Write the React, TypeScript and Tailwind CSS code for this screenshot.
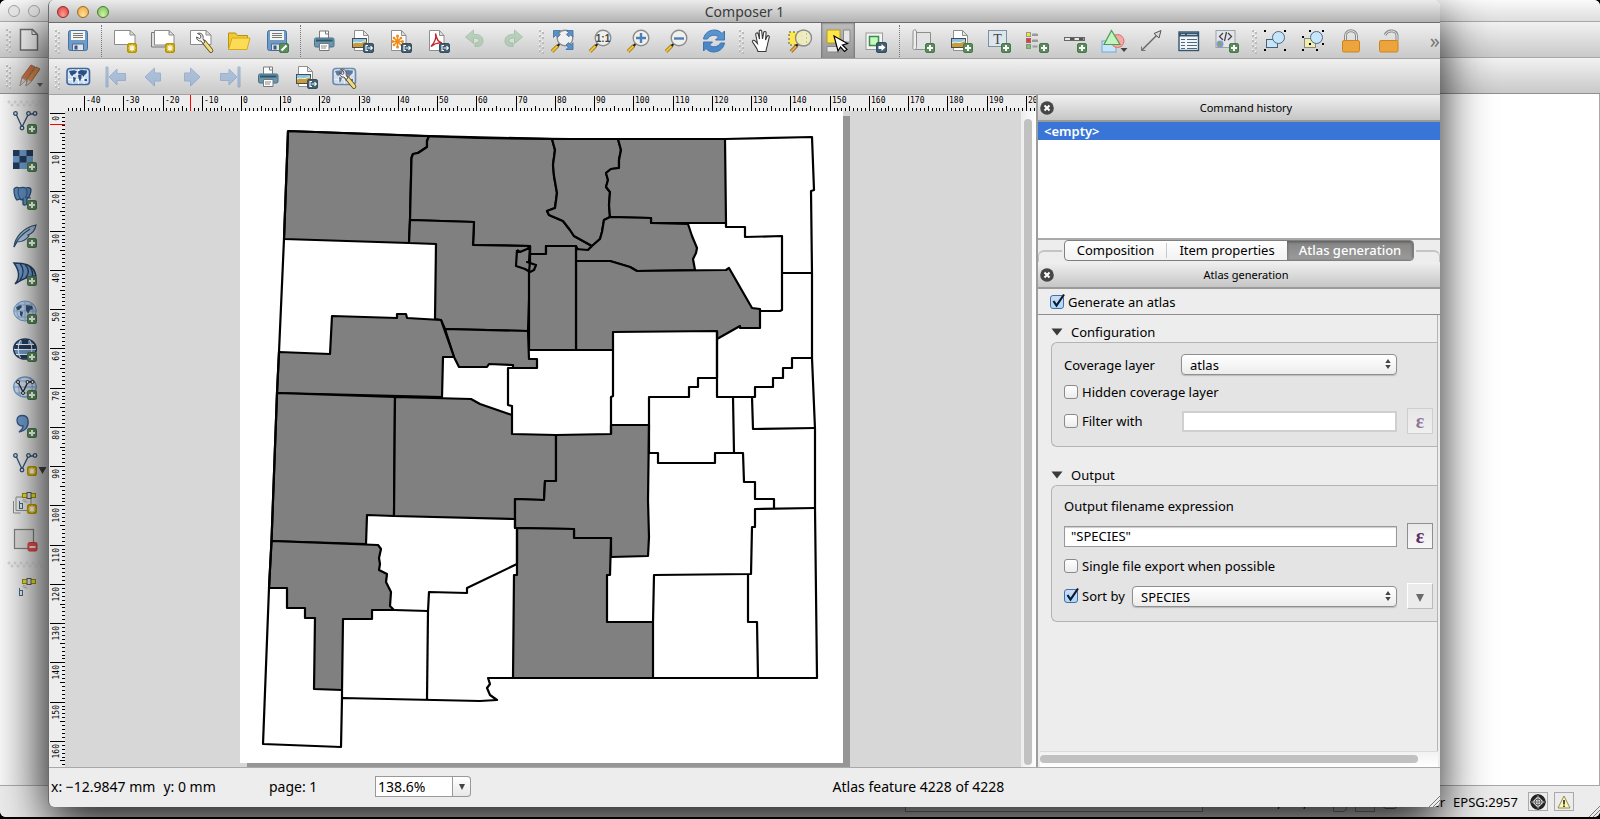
import { useState, type ReactNode } from "react";
import clsx from "clsx";

/* ---------- icon helpers ---------- */

function Icon({ children, faded }: { children: ReactNode; faded?: boolean }) {
    return (
        <svg viewBox="0 0 24 24" className={clsx("h-6 w-6 shrink-0 overflow-visible", faded && "opacity-50")} fill="none" aria-hidden="true">
            {children}
        </svg>
    );
}

function PlusBadge() {
    return (
        <g>
            <rect x="14.5" y="14.5" width="9" height="9" rx="1.5" fill="#5a8c5a" stroke="#48774a" />
            <path d="M19 16v6M16 19h6" stroke="#fff" strokeWidth="2" />
        </g>
    );
}

function StarBadge() {
    return (
        <g>
            <rect x="14.5" y="14.5" width="9" height="9" rx="1.5" fill="#c4a000" stroke="#b79500" />
            <path d="M19 15.5v7M15.5 19h7M16.5 16.5l5 5M21.500 16.500l-5 5" stroke="#fffbe0" strokeWidth="1.200" />
        </g>
    );
}

function ExportBadge() {
    return (
        <g>
            <rect x="13.500" y="14.500" width="10" height="9" rx="1.500" fill="#415f73" stroke="#34505f" />
            <path d="M18 16.500h-2v5h2M17.500 19h4.500M20.500 17.200l1.800 1.800-1.800 1.800" stroke="#fff" strokeWidth="1.100" />
        </g>
    );
}

function Lens({ children }: { children?: ReactNode }) {
    return (
        <g>
            <path d="M2 22.500l6-6" stroke="#8a6a10" strokeWidth="3.600" />
            <path d="M2 22.500l6-6" stroke="#f5c431" strokeWidth="2.200" />
            <path d="M7.500 17l2.500-2.500" stroke="#222" strokeWidth="2.200" />
            <circle cx="15" cy="9" r="7.800" fill="#f2f2f0" fillOpacity=".85" stroke="#8c8c8c" strokeWidth="1.400" />
            {children}
        </g>
    );
}

const sheet = "M4.500 1.500h9l5 5v15h-14zM13.500 1.500v5h5";
const wide = "M1.500 1.500h15.500l5 4.500v9.500h-20.500zM17 1.500v4.500h5";

function Wrench() {
    return (
        <g>
            <path d="M15 13l7 8.500" stroke="#5c4a18" strokeWidth="4.600" strokeLinecap="round" />
            <path d="M15.500 13.500l6.500 8" stroke="#f1dc86" strokeWidth="3" strokeLinecap="round" />
            <path d="M8.500 4.500c2-1 5 0 5.500 2.500.3 1.500 0 2.500 0 3l2 3-2 1.500-2-2.500c-2 .5-4.500-1-4.500-4l3 1.500 1.500-1-.5-2.500z" fill="#f6f6f6" stroke="#555" />
        </g>
    );
}

const saveShape = (
    <g>
        <rect x="2.500" y="1.500" width="19" height="20" rx="2" fill="#6f9bc8" stroke="#4472a4" />
        <rect x="5" y="2" width="14" height="9" fill="#f6f6f0" />
        <path d="M7 4.500h10M7 6.500h10M7 8.500h10" stroke="#777" />
        <path d="M6.500 21.500v-6.500h11v6.500z" fill="#dfe3ea" stroke="#4d6a92" />
        <rect x="8.500" y="16.500" width="3" height="4" fill="#355785" />
    </g>
);

const printShape = (
    <g>
        <path d="M7.500 9v-7h9l0 7" fill="#fff" stroke="#7b7b7b" />
        <path d="M13.500 2v3h3" stroke="#7b7b7b" />
        <rect x="2.500" y="9" width="19.500" height="9" rx="1.500" fill="#6a97ae" stroke="#47718a" />
        <path d="M4 11.500h16.500" stroke="#2f5468" strokeWidth="2" />
        <path d="M7.500 14.500h9.500v7h-9.500z" fill="#fff" stroke="#777" />
        <path d="M9 17h6M9 19h5" stroke="#888" />
    </g>
);

const pictureShape = (
    <g>
        <path d={sheet} fill="#fff" stroke="#8e8e8e" />
        <rect x="2.500" y="9.500" width="14" height="9" fill="#86c3ef" stroke="#4b4b4b" />
        <path d="M3 18v-3c3-2 6-1 8-1s4-2 5.500-1.500v5.500z" fill="#c89b3c" />
        <path d="M3 14c3-2 6 0 8-.5s3-2 5-1.500" stroke="#fff7c0" />
    </g>
);

const worldShape = (
    <g>
        <rect x="1" y="3.500" width="22.500" height="16" rx="3" fill="#cfe0f5" stroke="#3d689f" strokeWidth="1.600" />
        <path d="M2 9h20M2 14.500h20M7 4v15M12.500 4v15M18 4v15" stroke="#fff" strokeWidth=".8" />
        <path d="M3 6l5-.8 3 1-1.500 2.500-2.500 1-.5 1.500-2-1.500zM7 12l3 .8-1 3.200-1.500 2zM12 6.500l3-1.500 6 .5-.5 3-2 1.500-1 2-1.500-2-2-.5-1.500 0zM12 10l3.500 0 0 3-1.500 3.500-1.500-3zM18.500 14l2.500 0 0 2-2.500 0z" fill="#2c4f80" />
    </g>
);

const gpsShape = (
    <g>
        <path d="M9 5.500h14" stroke="#8e8b16" strokeWidth="5" />
        <path d="M10 5.500h12" stroke="#e2df20" strokeWidth="3" />
        <rect x="14" y="2.500" width="4" height="6" fill="#ddd" stroke="#555" />
        <path d="M13 10a4 4 0 0 1-3-1M14.500 12a7 7 0 0 1-5-1.500" stroke="#999" strokeWidth=".8" />
    </g>
);

const vectorShape = (
    <g stroke="#35506e" strokeWidth="1.300">
        <path d="M3 4l6 13L15.500 4h5.500" />
        <g fill="#d5deea">
            <circle cx="2.500" cy="3.500" r="1.800" />
            <circle cx="15.500" cy="3.500" r="1.800" />
            <circle cx="22" cy="3.500" r="1.800" />
            <circle cx="9" cy="18" r="1.800" />
        </g>
    </g>
);

const arrowLeft = "M2 12l9.500-9v5h6v8h-6v5z";
const undo = "M1.500 8l8-7v4.500c6-.5 9.500 2 9.500 6.500s-3.500 5.500-8 5.500v-3.500c3 0 4-1 4-2.500s-2-2.500-5.500-2.500v5.500z";

const ic: Record<string, ReactNode> = {
    newDoc: <Icon><path d="M3.500 1.500h12l5 5v15.500h-17z" fill="#f4f4f4" stroke="#6e6e6e" strokeWidth="1.500" /><path d="M15 1.500v5h5.500" stroke="#6e6e6e" /></Icon>,
    pencils: <Icon><path d="M3 22l2-9 9-12 4 2-9 13z" fill="#d27545" stroke="#9a6a50" /><path d="M9 22l1-7 9-12 4 2-9 13z" fill="#d98a4a" stroke="#a06c4b" /><path d="M3 22l2-8 4 2zM9 22l1.500-7 4 2.500z" fill="#d9cbb5" stroke="#999" /><path d="M20 19h6l-3 4z" fill="#666" /></Icon>,
    save: <Icon>{saveShape}</Icon>,
    newComp: <Icon><path d={wide} fill="#fff" stroke="#8b8b8b" /><StarBadge /></Icon>,
    dupComp: <Icon><path d="M.5 18v-14.500h18" stroke="#777" fill="#ddd" /><path d="M.5 4v14h14" stroke="#777" /><path d="M3.500 1.500h14.500l5 4.500v10h-19.500zM18 1.500v4.500h5" fill="#fff" stroke="#8b8b8b" /><StarBadge /></Icon>,
    compManager: <Icon><path d={wide} fill="#fff" stroke="#8b8b8b" /><Wrench /></Icon>,
    folder: <Icon><path d="M1.500 20.500v-16.500h7l2 2.500h10v3" fill="#f2c932" stroke="#b98f14" /><path d="M1.500 20.500l3.500-11.500h18l-3 11.500z" fill="#fcdb55" stroke="#d6a91d" /></Icon>,
    saveAs: <Icon>{saveShape}<rect x="14.500" y="14.500" width="9" height="9" rx="1.500" fill="#5a8c5a" stroke="#48774a" /><path d="M16.500 21.500l5-5" stroke="#fff" strokeWidth="2.200" /></Icon>,
    print: <Icon>{printShape}</Icon>,
    exportImg: <Icon>{pictureShape}<ExportBadge /></Icon>,
    exportSvg: <Icon><path d="M3.500 1.500h10l4.500 5v15h-14.500zM13.500 1.500v5h4.500" fill="#fff" stroke="#8e8e8e" /><path d="M9.500 7v11M4 12.500h11M5.500 8.500l8 8M13.500 8.500l-8 8" stroke="#f08c1e" strokeWidth="1.600" /><g fill="#f08c1e"><circle cx="9.500" cy="7" r="1.500" /><circle cx="9.500" cy="18" r="1.500" /><circle cx="4.500" cy="12.500" r="1.500" /><circle cx="14.500" cy="12.500" r="1.500" /><circle cx="6" cy="9" r="1.300" /><circle cx="13" cy="9" r="1.300" /><circle cx="6" cy="16" r="1.300" /></g><ExportBadge /></Icon>,
    exportPdf: <Icon><path d="M3.500 1.500h10l4.500 5v15h-14.500zM13.500 1.500v5h4.500" fill="#fff" stroke="#8e8e8e" /><path d="M9.500 4.500c1 4 0 8-4.500 13 3-2.500 7-4 11-3.500-3-.5-5.500-4-6.500-9.500z" stroke="#c4262b" strokeWidth="1.400" /><ExportBadge /></Icon>,
    undo: <Icon faded><path d={undo} fill="#8fbf94" stroke="#6ea877" /></Icon>,
    redo: <Icon faded><g transform="matrix(-1 0 0 1 22 0)"><path d={undo} fill="#8fbf94" stroke="#6ea877" /></g></Icon>,
    zoomFull: <Icon><Lens /><path d="M3.500 1.500h7l-2.200 2.200 2 2-2.600 2.600-2-2-2.200 2.200zM23 1.500v6.500l-2.200-2.200-2 2-2.400-2.400 2-2-2-1.900zM23 20.500h-7l2.300-2.300-2.300-2.200 2.400-2.500 2.400 2.400 2.200-2.200z" fill="#5b8fc6" stroke="#3a6ea6" strokeWidth=".8" /></Icon>,
    zoomActual: <Icon><Lens><text x="15" y="13" textAnchor="middle" fontSize="10" fontWeight="700" fill="#444" fontFamily="Liberation Sans, sans-serif">1:1</text></Lens></Icon>,
    zoomIn: <Icon><Lens><path d="M15 4v10M10 9h10" stroke="#4d7fb5" strokeWidth="2.400" /></Lens></Icon>,
    zoomOut: <Icon><Lens><path d="M10 9.500h10" stroke="#4d7fb5" strokeWidth="2.400" /></Lens></Icon>,
    refresh: <Icon><path d="M1.500 10c1-6 6-9 11-9 3 0 6 1.500 7.500 3.500l2.500-2.500v9h-9l3-3c-3-3-9-2-11 2z" fill="#5b93cf" stroke="#3b74b5" /><path d="M22.500 14c-1 6-6 9-11 9-3 0-6-1.500-7.500-3.500l-2.500 2.500v-9h9l-3 3c3 3 9 2 11-2z" fill="#4a86c8" stroke="#3b74b5" /></Icon>,
    hand: <Icon><path d="M8 22.500c-1-4-4-7-5.500-9.500-.5-1.500 1.500-2.500 2.500-1l2.500 2.500-1.800-9c-.2-1.800 2-2.200 2.500-.5l1.300 5-.3-7.500c0-1.800 2.500-1.800 2.600 0l.7 7.500 1.200-6.500c.4-1.600 2.600-1.200 2.400.5l-.6 7 1.500-3.500c.8-1.500 2.700-.8 2.200 1-.8 3-1.200 5-1.700 7-.5 3-1.500 4.500-1.500 7z" fill="#fff" stroke="#3c3c3c" strokeWidth="1.100" /></Icon>,
    zoomSel: <Icon><rect x="1" y="3" width="13" height="13" fill="#ffe948" stroke="#555" strokeDasharray="2 2" /><path d="M3 22.500l6-6" stroke="#8a5a10" strokeWidth="3.600" /><path d="M3 22.500l6-6" stroke="#e5ae4c" strokeWidth="2" /><path d="M8 17l2.500-2.500" stroke="#222" strokeWidth="2.200" /><circle cx="15.500" cy="9" r="8" fill="#efebc4" fillOpacity=".92" stroke="#8c8c8c" strokeWidth="1.400" /><path d="M18.500 4v10" stroke="#d6c861" strokeDasharray="2 2" /></Icon>,
    select: <Icon><rect x="1" y="1" width="13" height="13" fill="#ffe54a" stroke="#b29c1e" /><path d="M17.500 1h6.500v12h-6.500zM1 17.500h13v5.500h-13z" fill="#e6e6e6" stroke="#888" /><path d="M8 7l13.500 7.500-5 1.500 4.500 4.500-2.500 2-4-4.500-2.500 4z" fill="#fff" stroke="#000" strokeWidth="1.200" /></Icon>,
    moveContent: <Icon><rect x="2" y="4" width="16.500" height="16.500" fill="#f4f4f4" stroke="#999" /><rect x="5.500" y="7.500" width="9" height="9" fill="#c6fbc0" stroke="#3e8a48" strokeWidth="1.500" /><rect x="12.500" y="13.500" width="10" height="10" rx="1.500" fill="#415f73" stroke="#34505f" /><path d="M14.500 17h3v-2l4 3.500-4 3.500v-2h-3z" fill="#fff" /></Icon>,
    addMap: <Icon><path d="M4.500 3.500h15v17h-15z" fill="#e3e3e3" stroke="#8e8e8e" /><path d="M4.500 20.500c-3 1-3-2-2.500-3.500v-14c0-3 3.500-3 3.500 0v14.500c0 2-1 3-1 3z" fill="#eee" stroke="#8e8e8e" /><PlusBadge /></Icon>,
    addImage: <Icon>{pictureShape}<PlusBadge /></Icon>,
    addLabel: <Icon><rect x="1.500" y="1.500" width="18" height="16" fill="#dde6ee" stroke="#7e8f9e" /><text x="10.500" y="14.500" textAnchor="middle" fontSize="14" fill="#444" fontFamily="Liberation Serif, serif">T</text><PlusBadge /></Icon>,
    addLegend: <Icon><path d="M7.500 5.500h5M7.500 11.500h5M7.500 17.500h5M7 6h6M7 12h6" stroke="#999" strokeWidth="2" /><rect x="1.500" y="3.500" width="4" height="4" fill="#f2e61c" stroke="#999" /><rect x="1.500" y="9.500" width="4" height="4" fill="#d94040" stroke="#b06060" /><rect x="1.500" y="15.500" width="4" height="4" fill="#88bb80" stroke="#7a9a78" /><PlusBadge /></Icon>,
    addScale: <Icon><rect x="1.500" y="8.500" width="20" height="3" fill="#e8e8e8" stroke="#666" /><path d="M7 10h4.500M16 10h4.500" stroke="#555" strokeWidth="2" /><PlusBadge /></Icon>,
    addShape: <Icon><rect x="1" y="12" width="14" height="11" fill="#c7e5fa" stroke="#76a8cf" /><circle cx="16.500" cy="12" r="6.500" fill="#f3a9a5" stroke="#dd6f6b" /><path d="M10.500 1.500l8.500 14h-16z" fill="#c4f4bd" stroke="#4d9b56" strokeWidth="1.200" /><path d="M19.500 19h7l-3.500 4z" fill="#444" /></Icon>,
    addArrow: <Icon><path d="M2.500 21.500l15-15" stroke="#666" strokeWidth="1.400" /><path d="M22 1.500l-2 7.500-5-4.500z" fill="#d8d8d8" stroke="#555" /><path d="M2.500 17.500v4h4" stroke="#777" /></Icon>,
    addTable: <Icon><rect x="2" y="3" width="19.500" height="18.500" fill="#f2f5f7" stroke="#35556f" strokeWidth="1.400" /><path d="M2 5.500h19" stroke="#35556f" strokeWidth="4" /><path d="M4 5.500h4M10 5.500h10" stroke="#a9bccb" /><path d="M4 10.500h4M10 10.500h10M4 13.500h4M10 13.500h10M4 16.500h4M10 16.500h10M4 19.500h4M10 19.500h10" stroke="#4b6a82" /></Icon>,
    addHtml: <Icon><rect x="1" y="1.500" width="19" height="17" fill="#e2e6ea" stroke="#99a2aa" /><path d="M8 4l-3.500 3.500 3.500 3.500M13 4l3.500 3.500-3.500 3.500M11.500 3l-2 9" stroke="#444" strokeWidth="1.300" /><circle cx="5" cy="15" r="3.500" fill="#9b8ae0" /><path d="M3 13.500c2-1 4 0 3.500 2s-2 3-3 1.500z" fill="#58c05a" /><PlusBadge /></Icon>,
    group: <Icon><rect x="3.500" y="10.500" width="11" height="8" fill="#c7e5fa" stroke="#4a5f70" /><circle cx="15.500" cy="8.500" r="6" fill="#c7e5fa" stroke="#4a6a84" /><path d="M1 1h2v2h-2zM21 1h2v2h-2zM1 20h2v2h-2zM21 20h2v2h-2z" fill="#000" /></Icon>,
    ungroup: <Icon><rect x="3.500" y="9.500" width="11" height="9" fill="#f2eea6" stroke="#888" /><circle cx="15.500" cy="8.500" r="6" fill="#c7e5fa" stroke="#4a6a84" /><path d="M8 1h2v2h-2zM21 1h2v2h-2zM1 7h2v2h-2zM8 14h2v2h-2zM21 14h2v2h-2zM1 20h2v2h-2zM15 20h2v2h-2z" fill="#000" /></Icon>,
    lock: <Icon><path d="M6.500 12v-5c0-7 11-7 11 0v5" stroke="#8a8a8a" strokeWidth="3" /><path d="M6.500 12v-5c0-7 11-7 11 0v5" stroke="#e8e8e8" /><rect x="3.500" y="11.500" width="17" height="11.500" rx="1.500" fill="#eba53c" stroke="#cc8420" /></Icon>,
    unlock: <Icon><path d="M8 6c3-6 12-5 12 1v5" stroke="#8a8a8a" strokeWidth="3" /><path d="M8 6c3-6 12-5 12 1v5" stroke="#e8e8e8" /><rect x="2.500" y="11.500" width="18.500" height="11.500" rx="1.500" fill="#eba53c" stroke="#cc8420" /></Icon>,
    atlas: <Icon>{worldShape}</Icon>,
    first: <Icon faded><g fill="#7aa0d2" stroke="#5b86c0"><path d="M2 2h2v20h-2z" /><path d="M5 12l8-8v4.500h8.500v7h-8.500v4.500z" /></g></Icon>,
    prev: <Icon faded><g transform="translate(1 0)"><path d={arrowLeft} fill="#7aa0d2" stroke="#5b86c0" /></g></Icon>,
    next: <Icon faded><g transform="matrix(-1 0 0 1 22 0)"><path d={arrowLeft} fill="#7aa0d2" stroke="#5b86c0" /></g></Icon>,
    last: <Icon faded><g fill="#7aa0d2" stroke="#5b86c0" transform="matrix(-1 0 0 1 24 0)"><path d="M2 2h2v20h-2z" /><path d="M5 12l8-8v4.500h8.500v7h-8.500v4.500z" /></g></Icon>,
    atlasSettings: <Icon><g opacity=".7">{worldShape}</g><Wrench /></Icon>,
    vector: <Icon>{vectorShape}<PlusBadge /></Icon>,
    raster: <Icon><path d="M0 2h20v19h-20z" fill="#6c98c8" /><path d="M0 2h6.500v6h-6.500zM13.500 2h6.500v6h-6.500zM6.500 8h7v6.500h-7zM0 14.500h6.500v6.500h-6.500z" fill="#243b59" /><PlusBadge /></Icon>,
    postgis: <Icon><path d="M1 3c1-2 4-2 5-1 3-1 5-1 7 0 3-1 5 0 5 2 0 3-1 5-2 7l-2 1v6c-1 1.500-4 1.500-4 0v-5c-1 1-2 1-3 0l-3 1c-2-2-3-7-3-11z" fill="#5e8abb" stroke="#2b4c73" strokeWidth="1.300" /><path d="M5.500 3c-1 4 0 7 2 10M13 3c2 3 1 6-1 9M14 12h4" stroke="#2b4c73" /><PlusBadge /></Icon>,
    spatialite: <Icon><path d="M1 23c1-9 8-19 22-22-1 6-5 9-8 10l1 1c-3 4-8 6-12 6z" fill="#a9c3de" stroke="#35506e" strokeWidth="1.200" /><path d="M1 23c3-8 8-13 16-18" stroke="#35506e" strokeWidth="1.200" /><PlusBadge /></Icon>,
    mssql: <Icon><path d="M1 1c9 0 20 1 22 13-7 0-14 3-21 8 6-7 4-14-1-21z" fill="#6c98c8" stroke="#243b59" strokeWidth="1.400" /><path d="M7 1.500c4 5 4 11 0 16.500M12 2.500c4 4 4 9 1 13M17 5c3 4 3 7 2 10" stroke="#243b59" strokeWidth="1.300" /><PlusBadge /></Icon>,
    wms: <Icon><ellipse cx="12" cy="11" rx="11.300" ry="10" fill="#bcd0e8" stroke="#6f97c4" /><path d="M1 11h22M4 5h16M4 17h16M12 1v20M7 2c-4 6-4 12 0 18M17 2c4 6 4 12 0 18" stroke="#86a9d2" /><path d="M3 7l5-2 1 2-3 3-2 0zM7 11l3 1-1 5-2-2zM13 5l6 1 1 3-3 1-2 4-2-4z" fill="#35506e" /><PlusBadge /></Icon>,
    wcs: <Icon><ellipse cx="12" cy="11" rx="11.300" ry="10" fill="#6c98c8" stroke="#243b59" strokeWidth="1.500" /><path d="M2 7h20v4h-20zM6 17h12v3h-12zM9 2h6v4h-6z" fill="#243b59" /><path d="M1 11.500h22M3 6.500h18M3 16.500h18M7.500 2c-3 6-3 12 0 18M16.500 2c3 6 3 12 0 18" stroke="#eef3f8" /><PlusBadge /></Icon>,
    wfs: <Icon><ellipse cx="12" cy="11" rx="11.300" ry="10" fill="#cbd9ea" stroke="#6f97c4" strokeWidth="1.300" /><path d="M1 11h22M4 5h16M4 17h16M8 1c-3 6-3 14 0 20M17 2c3 6 3 12 0 18" stroke="#7ba0cc" /><path d="M5 6l5 10 5-10h4" stroke="#222" strokeWidth="1.300" /><g fill="#fff" stroke="#222"><circle cx="5" cy="6" r="1.500" /><circle cx="14.500" cy="6" r="1.500" /><circle cx="19.500" cy="6" r="1.500" /><circle cx="10" cy="17" r="1.500" /></g><PlusBadge /></Icon>,
    csv: <Icon><path d="M4 6c0-6 10-6 11 0 1 7-3 11-9 12 4-3 4-5 4-6-4 0-6-2-6-6z" fill="#6c98c8" stroke="#35588a" strokeWidth="1.300" /><PlusBadge /></Icon>,
    newVector: <Icon>{vectorShape}<StarBadge /><path d="M25.500 15h8l-4 7z" fill="#444" /></Icon>,
    gpsNew: <Icon><path d="M.5 11v12h7M3 7v13.500h15v-13.500z" stroke="#8b8b8b" /><rect x="6.500" y="13.500" width="3" height="5" stroke="#3d6b85" /><path d="M6.500 11v3" stroke="#3d6b85" />{gpsShape}<StarBadge /></Icon>,
    removeLayer: <Icon><rect x="1.500" y="1.500" width="19" height="19" fill="#d9dad8" stroke="#7d7d7d" strokeWidth="1.200" /><rect x="15" y="14.500" width="9" height="8.500" rx="1.500" fill="#e0504e" stroke="#c93e3c" /><path d="M16.500 19h6" stroke="#fff" strokeWidth="1.600" /></Icon>,
    gps: <Icon><rect x="6.500" y="14.500" width="3" height="5" stroke="#3d6b85" /><path d="M6.500 12v3" stroke="#3d6b85" />{gpsShape}</Icon>,
};

/* ---------- toolbars ---------- */

function Grip() {
    return (
        <svg width="10" height="26" viewBox="0 0 10 26" className="shrink-0 overflow-visible" aria-hidden="true">
            {[0, 1, 2, 3, 4].map((i) => (
                <g key={i}>
                    <path d={`M6 ${i * 5 + 2}h2v2h-2zM9 ${i * 5 + 4}h2v2h-2z`} fill="#bbb" />
                    <path d={`M6 ${i * 5 + 1}h1v1h-1zM9 ${i * 5 + 3}h1v1h-1z`} fill="#fff" />
                </g>
            ))}
        </svg>
    );
}

function HGrip() {
    return (
        <svg width="36" height="7" viewBox="0 0 36 7" className="shrink-0" aria-hidden="true">
            {[0, 1, 2, 3, 4, 5].map((i) => (
                <path key={i} d={`M${i * 6 + 1} 1h2v2h-2zM${i * 6 + 4} 4h2v2h-2z`} fill="#e4e4e4" stroke="#bdbdbd" strokeWidth=".5" />
            ))}
        </svg>
    );
}

function Separator() {
    return <div className="mx-1 h-8 w-px shrink-0 border-l border-dotted border-[#777]" />;
}

function ToolButton({ name, active }: { name: string; active?: boolean }) {
    return (
        <button
            type="button"
            aria-label={name}
            className="flex h-9 w-[38px] shrink-0 items-center justify-center"
        >
            <span className={clsx("flex h-9 w-[34px] items-center justify-center", active && "bg-linear-to-b from-[#bdbdbd] to-[#949494] shadow-[inset_1px_0_2px_#777,inset_-1px_0_2px_#777]")}>
                {ic[name]}
            </span>
        </button>
    );
}

const mainTools = [
    "grip", "save", "sep", "newComp", "dupComp", "compManager", "folder", "saveAs", "sep",
    "print", "exportImg", "exportSvg", "exportPdf", "undo", "redo", "grip",
    "zoomFull", "zoomActual", "zoomIn", "zoomOut", "refresh", "grip",
    "hand", "zoomSel", "select", "moveContent", "sep",
    "addMap", "addImage", "addLabel", "addLegend", "addScale", "addShape", "addArrow", "addTable", "addHtml", "grip",
    "group", "ungroup", "lock", "unlock",
];
const atlasTools = ["grip", "atlas", "first", "prev", "next", "last", "print", "exportImg", "atlasSettings"];
const layerTools = ["vector", "raster", "postgis", "spatialite", "mssql", "wms", "wcs", "wfs", "csv", "newVector", "gpsNew", "removeLayer"];

function Toolbar({ items, children }: { items: string[]; children?: ReactNode }) {
    return (
        <div className="flex h-9 shrink-0 items-center overflow-hidden border-b border-[#a3a3a3] bg-linear-to-b from-[#f0f0f0] to-[#c9c9c9]">
            {items.map((t, i) => {
                if (t === "grip") return <Grip key={i} />;
                if (t === "sep") return <Separator key={i} />;
                return <ToolButton key={i} name={t} active={t === "select"} />;
            })}
            {children}
        </div>
    );
}

/* ---------- map canvas ---------- */

const MM = 39.24;

function tickPath(length: number, origin: number, vertical: boolean) {
    let d = "";
    for (let i = Math.ceil((-origin / MM) * 10); i <= ((length - origin) / MM) * 10; i++) {
        const at = Math.round(origin + (i * MM) / 10) + 0.5;
        const size = i % 10 === 0 ? 15 : i % 5 === 0 ? 5 : 3;
        d += vertical ? `M15 ${at}h${-size}` : `M${at} 16v${-size}`;
    }
    return d;
}

function HorizontalRuler() {
    return (
        <svg className="h-4 min-w-0 flex-1" aria-label="Horizontal ruler">
            <path d={tickPath(971, 176, false)} stroke="#000" />
            <path d="M125.500 0v16" stroke="#f00" />
            {Array.from({ length: 25 }, (_, i) => i - 4).map((n) => (
                <text key={n} x={Math.round(178 + n * MM)} y="8" className="font-['DejaVu_Sans_Mono',monospace] text-[8px]">
                    {n * 10}
                </text>
            ))}
        </svg>
    );
}

function VerticalRuler() {
    return (
        <svg className="h-full w-[15px] shrink-0 bg-[#ededed]" aria-label="Vertical ruler">
            <path d={tickPath(655, 2, true)} stroke="#000" />
            <path d="M0 13.500h15" stroke="#f00" />
            {Array.from({ length: 17 }, (_, i) => i).map((n) => (
                <text
                    key={n}
                    textAnchor="end"
                    transform={`translate(9 ${Math.round(5 + n * MM)}) rotate(-90)`}
                    className="font-['DejaVu_Sans_Mono',monospace] text-[8px]"
                >
                    {n * 10}
                </text>
            ))}
        </svg>
    );
}

// counties that carry the dark fill
const shaded = [
    "288,131 429,136 427,141 427,147 418,153 413,154 411.5,158 410,220 409,243 284,239",
    "429,136 552,139 555,150 553,165 554,176 557,193 555,208 547,211 549,215 563,221 570,230 574,236 592,246 588,250 578,250 576,246 546,246 546,254 530,254 530,246 473,245 474,222 410,220 411.5,158 413,154 418,153 427,147 427,141",
    "410,220 474,222 473,245 530,246 530,272 528,331 445,329 441,320 435,319 436,244 409,243",
    "552,139 618,139 621,150 619,160 619,168 611,169 606,173 608,180 606,187 610,192 609,205 610,217 604,220 602,232 600,239 592,246 574,236 570,230 563,221 549,215 547,211 555,208 557,193 554,176 553,165 555,150",
    "618,139 725,139 726,223 651,223 651,218 610,217 609,205 610,192 606,187 608,180 606,173 611,169 619,168 619,160 621,150",
    "610,217 651,218 651,223 688,224 692,236 697,248 696,253 693,259 695,270 637,271 630,267 610,261 576,261 576,249 588,250 592,246 600,239 602,232 604,220",
    "576,261 610,261 630,267 637,271 726,270 729,268 752,308 760,309 760,328 740,328 740,326 717,339 717,331 613,332 613,350 576,350",
    "530,254 546,254 546,246 576,246 576,350 529,350 529,272 530,262",
    "445,329 528,331 529,359 537,359 537,368 513,368 513,365 489,364 487,367 459,367 454,357",
    "332,316 397,318 397,314 406,314 407,318 441,320 454,357 443,357 442,397 277,393 279,352 330,354",
    "277,393 395,397 394,516 367,515 366,544 271.5,541 276,420",
    "395,397 471,399 480,404 512,415 512,434 556,435 556,481 545,481 544,500 515,499 515,519 394,516",
    "556,435 611,434 611,425 649,425 648,500 649,537 648,556 611,557 611,538 574,538 574,529 515,528 515,499 544,500 545,481 556,481",
    "517,528 574,529 574,538 611,538 610,575 607,575 607,622 653,622 653,678 513,678 514,575 517,575",
    "271.5,541 378,545 381,549 379,558 380,564 379,570 387,574 386,582 391,592 390,606 394,610 372,610 372,619 343,619 342,690 314,689 315,618 305,618 305,608 287,608 287,588 269,588",
];

const borders = [
    // state outline
    "288,131 478,138 570,139 725,139 812,137 814,190 811,191 812,273 812,358 815,429 815,508 817,678 513,678 488,678 490,684 487,688 490,695 497,700 480,701 342,698 341,747 263,744 269,588 271.5,541 276,420 277,393 279,352 284,239 288,131",
    "726,223 726,227 745,227 745,237 782,236 782,273 811,273",
    "782,273 782,310 780,311 760,311",
    "517,250 520,252 527,249 530,247 529,262 527,262 536,265 534,270 530,272 525,269 516,266 517,250",
    "513,368 508,368 508,405 512,406 512,415",
    "529,350 613,350 613,396 611,397 611,434",
    "717,331 717,378 698,378 698,387 689,387 689,397 649,397 649,425",
    "717,339 717,397 755,397 755,387 773,387 773,378 783,378 783,368 792,368 792,358 812,358",
    "752,397 753,429 815,428",
    "649,425 649,453 658,453 658,463 715,463 715,453 734,453 733,397",
    "734,453 743,453 744,482 755,482 755,499 774,499 774,508",
    "815,508 755,509 755,527 752,527 751,574 654,575 653,622",
    "748,575 748,622 757,622 758,678",
    "515,519 515,528 517,528 517,564 467,588 467,593 429,592 428,611 394,610",
    "428,611 427,699",
    "342,690 342,698",
];

function MapPage() {
    return (
        <svg viewBox="240 111 603 652" className="h-full w-full" aria-label="Map">
            <g stroke="#000" strokeWidth="2.200" strokeLinejoin="round">
                {shaded.map((p) => (
                    <polygon key={p} points={p} fill="#808080" />
                ))}
                {borders.map((p) => (
                    <polyline key={p} points={p} fill="none" />
                ))}
            </g>
        </svg>
    );
}

/* ---------- form controls ---------- */

function CheckBox({ label, defaultChecked }: { label: string; defaultChecked?: boolean }) {
    const [checked, setChecked] = useState(!!defaultChecked);
    return (
        <label className="flex items-center gap-1 whitespace-nowrap">
            <span className="relative h-3.5 w-3.5 shrink-0">
                <input
                    type="checkbox"
                    checked={checked}
                    onChange={(e) => setChecked(e.target.checked)}
                    className="block h-3.5 w-3.5 appearance-none rounded-[3px] border border-[#8a8a8a] bg-linear-to-b from-white to-[#ececec] checked:border-[#4a6aa8] checked:from-[#c9ddf4] checked:to-[#a5dafb]"
                />
                {checked && (
                    <svg viewBox="0 0 16 16" className="pointer-events-none absolute -top-0.5 left-0 h-4 w-4">
                        <path d="M3.500 8l3 4.500L14 1.500" fill="none" stroke="#10182e" strokeWidth="2.200" />
                    </svg>
                )}
            </span>
            {label}
        </label>
    );
}

function PopupSelect({ id, value, label }: { id: string; value: string; label?: string }) {
    return (
        <div className="relative h-[21px] min-w-0 flex-1">
            <select
                id={id}
                aria-label={label}
                className="h-full w-full appearance-none rounded border border-[#8f8f8f] bg-linear-to-b from-white via-[#f6f6f6] to-[#ececec] pl-2 shadow-[0_1px_1px_#bbb]"
            >
                <option>{value}</option>
            </select>
            <svg viewBox="0 0 6 12" className="pointer-events-none absolute top-1 right-1.5 h-3 w-1.5">
                <path d="M3 1l2.700 4h-5.400zM3 11l2.700-4h-5.400z" fill="#444" />
            </svg>
        </div>
    );
}

function ExpressionButton({ disabled }: { disabled?: boolean }) {
    return (
        <button
            type="button"
            disabled={disabled}
            aria-label="Expression"
            className={clsx(
                "h-[26px] w-[26px] shrink-0 border bg-linear-to-b from-[#e9e9e9] to-[#f8f8f8] font-['Liberation_Serif',serif] text-xl leading-5 font-bold text-[#5c2f66]",
                disabled ? "border-[#c0c0c0] opacity-60" : "border-[#8f8f8f]",
            )}
        >
            ε
        </button>
    );
}

function DockTitle({ title }: { title: string }) {
    return (
        <div className="flex h-[27px] shrink-0 items-center border-b-2 border-[#9a9a9a] bg-linear-to-b from-[#f0f0f0] to-[#c6c6c6] px-0.5 text-[11px]">
            <button type="button" aria-label={`Close ${title}`} className="shrink-0">
                <svg viewBox="0 0 14 14" className="h-3.5 w-3.5">
                    <circle cx="7" cy="7" r="6.800" fill="#464646" />
                    <path d="M4.500 4.500l5 5M9.500 4.500l-5 5" stroke="#fff" strokeWidth="2" />
                </svg>
            </button>
            <h2 className="flex-1 text-center">{title}</h2>
        </div>
    );
}

function GroupTitle({ title }: { title: string }) {
    return (
        <h3 className="flex h-5 items-center gap-2">
            <svg viewBox="0 0 12 8" className="h-2 w-3">
                <path d="M.5 .5h11l-5.500 7z" fill="#3a3a3a" />
            </svg>
            {title}
        </h3>
    );
}

function AtlasPanel() {
    return (
        <div className="flex min-h-0 flex-1 flex-col">
            <div className="flex h-[26px] shrink-0 items-center border-b border-[#8f8f8f] pl-3">
                <CheckBox label="Generate an atlas" defaultChecked />
            </div>
            <div className="mr-0.5 min-h-0 flex-1 overflow-hidden border-r border-[#b4b4b4] pt-[7px] pl-[13px]">
                <GroupTitle title="Configuration" />
                <div className="flex h-[105px] flex-col rounded-l-md border border-r-0 border-[#b4b4b4] bg-[#e4e4e4] px-3 pt-[11px] pr-1">
                    <div className="flex h-[21px] items-center pr-9">
                        <label htmlFor="coverage" className="w-[117px] shrink-0">Coverage layer</label>
                        <PopupSelect id="coverage" value="atlas" />
                    </div>
                    <div className="mt-[7px] flex h-5 items-center">
                        <CheckBox label="Hidden coverage layer" />
                    </div>
                    <div className="mt-1.5 flex h-[26px] items-center">
                        <div className="w-[118px] shrink-0">
                            <CheckBox label="Filter with" />
                        </div>
                        <input aria-label="Filter expression" className="h-[21px] min-w-0 flex-1 border-2 border-[#cfcfcf] bg-white px-1" />
                        <div className="ml-2.5 flex">
                            <ExpressionButton disabled />
                        </div>
                    </div>
                </div>
                <div className="mt-[18px]">
                    <GroupTitle title="Output" />
                </div>
                <div className="flex h-[137px] flex-col rounded-l-md border border-r-0 border-[#b4b4b4] bg-[#e4e4e4] px-3 pt-2.5 pr-1">
                    <label htmlFor="filename" className="leading-5">Output filename expression</label>
                    <div className="mt-[7px] flex h-[26px] items-center gap-2.5">
                        <input id="filename" defaultValue={'"SPECIES"'} className="h-[21px] min-w-0 flex-1 border border-[#999] bg-white px-1.5 shadow-[inset_0_1px_1px_#ccc]" />
                        <ExpressionButton />
                    </div>
                    <div className="mt-[7px] flex h-5 items-center">
                        <CheckBox label="Single file export when possible" />
                    </div>
                    <div className="mt-[7px] flex h-[26px] items-center">
                        <div className="w-[68px] shrink-0">
                            <CheckBox label="Sort by" defaultChecked />
                        </div>
                        <PopupSelect id="sort" label="Sort field" value="SPECIES" />
                        <button type="button" aria-label="Sort direction" className="ml-2.5 flex h-[26px] w-[26px] items-center justify-center border border-t-white border-r-[#bbb] border-b-[#bbb] border-l-white bg-[#ebebeb] pt-1">
                            <svg viewBox="0 0 8 8" className="h-2 w-2"><path d="M0 0h8l-4 8z" fill="#6a6a6a" /></svg>
                        </button>
                    </div>
                </div>
            </div>
            <div className="mx-0.5 h-4 shrink-0 border-t border-[#dcdcdc] bg-linear-to-b from-[#f2f2f2] to-white py-[3px]">
                <div className="h-2 w-[95%] rounded-full bg-[#c1c1c1]" />
            </div>
        </div>
    );
}

function Docks() {
    return (
        <aside className="flex w-[404px] shrink-0 flex-col border-l-2 border-[#9d9d9d] bg-[#ededed]">
            <DockTitle title="Command history" />
            <ul className="h-[118px] shrink-0 border-b-2 border-[#a9a9a9] bg-white">
                <li className="h-[18px] bg-[#3875d7] px-1.5 leading-[18px] font-semibold text-white">&lt;empty&gt;</li>
            </ul>
            <div className="flex h-[22px] shrink-0 items-start">
                <div className="mt-2.5 h-3 flex-1 rounded-tl-md border-t-2 border-l border-[#c4c4c4]" />
                <div role="tablist" className="mx-0.5 flex h-[21px] w-[350px] overflow-hidden rounded border border-[#808080] bg-linear-to-b from-white to-[#f2f2f2] leading-[19px]">
                    <button type="button" role="tab" className="my-0.5 w-[102px] border-r border-[#c9c9c9] leading-[15px]">Composition</button>
                    <button type="button" role="tab" className="w-[120px]">Item properties</button>
                    <button type="button" role="tab" aria-selected="true" className="flex-1 bg-linear-to-b from-[#858585] to-[#9b9b9b] font-medium text-white shadow-[inset_0_1px_3px_#555]">Atlas generation</button>
                </div>
                <div className="mt-2.5 h-3 flex-1 rounded-tr-md border-t-2 border-r border-[#c4c4c4]" />
            </div>
            <DockTitle title="Atlas generation" />
            <AtlasPanel />
        </aside>
    );
}

function SizeGrip() {
    return (
        <svg viewBox="0 0 12 12" className="absolute right-0 bottom-0 h-3 w-3">
            <path d="M1 12L12 1M5 12l7-7M9 12l3-3" stroke="#777" />
        </svg>
    );
}

/* ---------- windows ---------- */

function ComposerWindow() {
    return (
        <section className="absolute top-0 right-40 bottom-3 left-12 flex flex-col overflow-hidden rounded-md border-l border-[#6b6b6b] bg-[#ededed] shadow-[0_18px_50px_rgba(0,0,0,0.9)]">
            <header className="relative flex h-[23px] shrink-0 items-center border-b border-[#6c6c6c] bg-linear-to-b from-[#ececec] to-[#b4b4b4] pt-0.5">
                <div className="absolute left-2 flex gap-2">
                    <span className="h-3 w-3 rounded-full border border-[#8d2a26] bg-radial-[at_50%_80%] from-[#ff9d96] to-[#dc3b37]" />
                    <span className="h-3 w-3 rounded-full border border-[#9a6a1e] bg-radial-[at_50%_80%] from-[#ffe39a] to-[#eba03a]" />
                    <span className="h-3 w-3 rounded-full border border-[#4a7a30] bg-radial-[at_50%_80%] from-[#cdf5a8] to-[#75bc52]" />
                </div>
                <h1 className="flex-1 text-center text-sm text-[#3a3a3a]">Composer 1</h1>
            </header>
            <Toolbar items={mainTools}>
                <button type="button" aria-label="More tools" className="ml-auto text-xl leading-none text-[#777]">»</button>
            </Toolbar>
            <Toolbar items={atlasTools} />
            <div className="flex min-h-0 flex-1 border-b border-[#a9a9a9]">
                <main className="flex min-w-0 flex-1 flex-col pl-px">
                    <div className="flex h-4 shrink-0 bg-[#ededed]">
                        <div className="w-[15px] shrink-0" />
                        <HorizontalRuler />
                    </div>
                    <div className="flex min-h-0 flex-1">
                        <VerticalRuler />
                        <div className="relative min-w-0 flex-1 overflow-hidden bg-[#d7d7d7]">
                            <div className="absolute top-0 left-[175px] h-[652px] w-[603px] bg-white shadow-[7px_5px_0_#969696]">
                                <MapPage />
                            </div>
                        </div>
                        <div className="w-[15px] shrink-0 bg-linear-to-r from-[#ececec] to-white px-[3px] pt-2 pb-0.5">
                            <div className="h-full w-2 rounded-full bg-[#c1c1c1]" />
                        </div>
                    </div>
                </main>
                <Docks />
            </div>
            <footer className="relative flex h-[39px] shrink-0 items-center pb-0.5 text-sm">
                <div className="flex w-[218px] shrink-0 gap-2 pl-0.5">
                    <span>x: −12.9847 mm</span>
                    <span>y: 0 mm</span>
                </div>
                <span className="w-[108px] shrink-0 pl-0.5">page: 1</span>
                <div className="flex h-[21px] w-24 shrink-0">
                    <input aria-label="Zoom level" defaultValue="138.6%" className="min-w-0 flex-1 border border-[#999] bg-white px-0.5" />
                    <button type="button" aria-label="Zoom presets" className="flex w-[18px] items-center justify-center rounded-r border border-l-0 border-[#999] bg-linear-to-b from-white to-[#e8e8e8]">
                        <svg viewBox="0 0 8 6" className="h-1.5 w-2"><path d="M1 0h6l-3 6z" fill="#444" /></svg>
                    </button>
                </div>
                <span className="flex-1 pr-[74px] text-center">Atlas feature 4228 of 4228</span>
                <SizeGrip />
            </footer>
        </section>
    );
}

function MainWindow() {
    return (
        <div className="flex h-full flex-col overflow-hidden rounded-md bg-[#e8e8e8]">
            <div className="flex h-[22px] shrink-0 items-center gap-2 border-b border-[#a8a8a8] bg-linear-to-b from-[#fafafa] to-[#dedede] px-2">
                <span className="h-3 w-3 rounded-full border border-[#a5a5a5] bg-[#e9e9e9]" />
                <span className="h-3 w-3 rounded-full border border-[#a5a5a5] bg-[#e9e9e9]" />
            </div>
            <div className="flex h-9 shrink-0 items-center border-b border-[#a8a8a8] bg-linear-to-b from-[#f2f2f2] to-[#c9c9c9]">
                <Grip />
                <ToolButton name="newDoc" />
            </div>
            <div className="flex h-9 shrink-0 items-center border-b border-[#8f8f8f] bg-linear-to-b from-[#f2f2f2] to-[#c9c9c9]">
                <Grip />
                <ToolButton name="pencils" />
            </div>
            <div className="flex min-h-0 flex-1">
                <nav className="flex w-[49px] shrink-0 flex-col items-center bg-linear-to-r from-[#f8f8f8] to-[#cfcfcf] pt-1.5">
                    <HGrip />
                    <div className="-mt-1 mb-0.5">
                        {layerTools.map((t) => (
                            <button key={t} type="button" aria-label={t} className="flex h-[38px] items-center">{ic[t]}</button>
                        ))}
                    </div>
                    <HGrip />
                    <button type="button" aria-label="gps" className="mt-2">{ic.gps}</button>
                </nav>
                <div className="flex-1 border-r border-[#a8a8a8] bg-white" />
            </div>
            <div className="relative flex h-8 shrink-0 items-center justify-end border-t border-[#a8a8a8] bg-[#ececec] pr-[26px]">
                <div className="mr-14 h-5 w-[298px] border border-[#999] bg-white" />
                <span className="mr-1">1:2,745,725</span>
                <div className="mr-2 h-5 w-3.5 rounded-r border border-[#999]" />
                <div className="mr-2 h-5 w-5 border border-[#999]" />
                <label className="mr-2 flex items-center gap-1">
                    <input type="checkbox" defaultChecked className="h-3.5 w-3.5 appearance-none rounded-[3px] border border-[#777]" />
                    Render
                </label>
                <span className="mr-2.5">EPSG:2957</span>
                <button type="button" aria-label="Projection" className="mr-1.5 flex h-[19px] w-5 items-center justify-center border border-[#aaa]">
                    <svg viewBox="0 0 16 16" className="h-4 w-4" fill="none" stroke="#222">
                        <circle cx="8" cy="8" r="6.500" strokeWidth="2.400" />
                        <path d="M8 1L15 8 8 15 1 8z" fill="#ddd" strokeWidth="1.500" />
                        <path d="M8 1v14M1 8h14" stroke="#777" />
                        <circle cx="8" cy="8" r="3" stroke="#555" />
                    </svg>
                </button>
                <button type="button" aria-label="Messages" className="flex h-[19px] w-5 items-center justify-center border border-[#aaa]">
                    <svg viewBox="0 0 14 14" className="h-3.5 w-3.5">
                        <path d="M7 1l6 12h-12z" fill="#fdf8b8" stroke="#8f8b50" />
                        <path d="M7 5v4.500M7 10.500v1.500" stroke="#222" strokeWidth="1.600" />
                    </svg>
                </button>
                <SizeGrip />
            </div>
        </div>
    );
}

export default function App() {
    return (
        <div className="relative h-screen w-full overflow-hidden bg-black pb-0.5 font-['Noto_Sans',sans-serif] text-[13px] leading-5 text-black">
            <MainWindow />
            <ComposerWindow />
        </div>
    );
}
